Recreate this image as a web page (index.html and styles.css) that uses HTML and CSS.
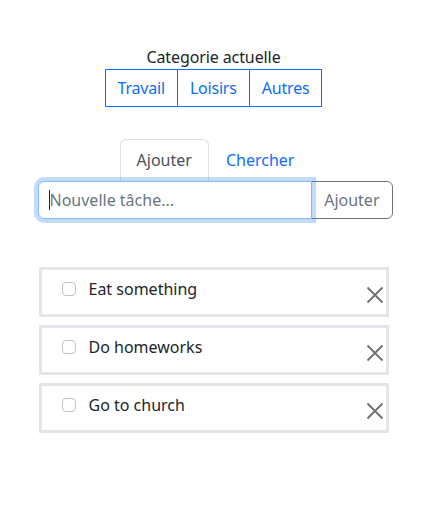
FILE: index.html
```html
<!DOCTYPE html>
<html lang="fr">
<head>
<meta charset="utf-8">
<title>Tâches</title>
<link rel="stylesheet" href="styles.css">
</head>
<body>
<div class="app">
  <section class="category">
    <div class="category-title">Categorie actuelle</div>
    <div class="btn-group">
      <button class="btn-outline">Travail</button>
      <button class="btn-outline">Loisirs</button>
      <button class="btn-outline">Autres</button>
    </div>
  </section>

  <nav class="tabs">
    <span class="tab active">Ajouter</span>
    <span class="tab">Chercher</span>
  </nav>

  <div class="input-group">
    <div class="field">
      <input class="text-input" type="text" placeholder="Nouvelle tâche...">
      <span class="caret"></span>
    </div>
    <button class="btn-add">Ajouter</button>
  </div>

  <ul class="task-list">
    <li class="task">
      <span class="check"></span>
      <span class="label">Eat something</span>
      <svg class="remove" viewBox="0 0 18 18" width="18" height="18"><path d="M1.5 1.5 16.5 16.5M16.5 1.5 1.5 16.5" stroke="#6c6f73" stroke-width="1.8" fill="none"/></svg>
    </li>
    <li class="task">
      <span class="check"></span>
      <span class="label">Do homeworks</span>
      <svg class="remove" viewBox="0 0 18 18" width="18" height="18"><path d="M1.5 1.5 16.5 16.5M16.5 1.5 1.5 16.5" stroke="#6c6f73" stroke-width="1.8" fill="none"/></svg>
    </li>
    <li class="task">
      <span class="check"></span>
      <span class="label">Go to church</span>
      <svg class="remove" viewBox="0 0 18 18" width="18" height="18"><path d="M1.5 1.5 16.5 16.5M16.5 1.5 1.5 16.5" stroke="#6c6f73" stroke-width="1.8" fill="none"/></svg>
    </li>
  </ul>
</div>
</body>
</html>
```
FILE: styles.css
```css
* { box-sizing: border-box; }
html, body { margin: 0; padding: 0; background: #fff; }
body {
  font-family: "Noto Sans", "Open Sans", sans-serif;
  font-size: 16px;
  line-height: 24px;
  color: #212529;
}
.app {
  display: flex;
  flex-direction: column;
  align-items: center;
  padding-top: 45px;
}
.category {
  display: flex;
  flex-direction: column;
  align-items: center;
}
.category-title { height: 24px; letter-spacing: -0.1px; }
.btn-group { display: flex; }
.btn-outline {
  font: inherit;
  letter-spacing: -0.2px;
  color: #0d6efd;
  background: #fff;
  border: 1px solid #0d6efd;
  padding: 6px 12px;
  margin: 0;
  height: 38px;
}
.btn-outline + .btn-outline { margin-left: -1px; }

.tabs {
  display: flex;
  margin-top: 32px;
  margin-left: 4px;
}
.tab {
  padding: 8px 16px 9px;
  color: #0d6efd;
  border: 1px solid transparent;
  border-bottom: none;
  border-top-left-radius: 6px;
  border-top-right-radius: 6px;
}
.tab.active {
  color: #495057;
  border-color: #dee2e6;
}

.input-group {
  display: flex;
  width: 355px;
  margin-left: 3px;
}
.field {
  position: relative;
  flex: 1;
  z-index: 2;
}
.text-input {
  display: block;
  width: 100%;
  height: 38px;
  font: inherit;
  color: #212529;
  padding: 6px 11px;
  border: 1px solid #86b7fe;
  border-radius: 6px 0 0 6px;
  box-shadow: 0 0 0 4px rgba(13, 110, 253, 0.25);
  outline: none;
  caret-color: transparent;
}
.text-input::placeholder { color: #6c757d; opacity: 1; }
.caret {
  position: absolute;
  left: 11px;
  top: 9px;
  width: 1px;
  height: 20px;
  background: #212529;
}
.btn-add {
  font: inherit;
  color: #6c757d;
  background: #fff;
  border: 1px solid #6c757d;
  border-radius: 0 6px 6px 0;
  padding: 6px 12px;
  height: 38px;
  margin-left: -1px;
}

.task-list {
  list-style: none;
  margin: 48px 0 0;
  padding: 0;
  width: 350px;
  display: flex;
  flex-direction: column;
  gap: 8px;
}
.task {
  display: flex;
  align-items: flex-start;
  height: 50px;
  border: 3px solid #e2e5e9;
  padding: 7px 2px 0 20px;
}
.check {
  width: 14px;
  height: 14px;
  margin-top: 5px;
  border: 1px solid #bfc3c7;
  border-radius: 4px;
  flex: none;
}
.label { margin-left: 13px; flex: 1; }
.remove { margin-top: 9px; flex: none; }
```
